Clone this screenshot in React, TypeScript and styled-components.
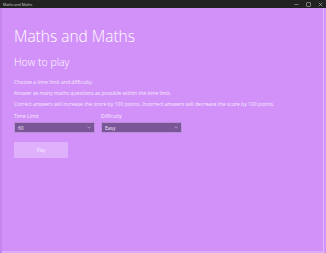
import React from "react";
import styled, { createGlobalStyle } from "styled-components";

const Global = createGlobalStyle`
  html, body { margin: 0; padding: 0; background: #d291f9; }
  body { font-family: "Open Sans", "Noto Sans", sans-serif; }
`;

const Window = styled.div`
  width: 326px;
  height: 253px;
  display: flex;
  flex-direction: column;
  background: #d291f9;
  overflow: hidden;
`;

const TitleBar = styled.div`
  height: 8px;
  background: #222222;
  display: flex;
  align-items: center;
  justify-content: space-between;
  padding-left: 3px;
  flex-shrink: 0;
`;

const TitleText = styled.span`
  color: #d8d8d8;
  font-size: 3.6px;
  font-family: "Open Sans", sans-serif;
`;

const Controls = styled.div`
  display: flex;
  height: 100%;
`;

const CtrlBtn = styled.div`
  width: 12px;
  height: 8px;
  display: flex;
  align-items: center;
  justify-content: center;
`;

const Body = styled.div`
  flex: 1;
  display: flex;
  min-height: 0;
`;

const LeftEdge = styled.div`
  width: 2px;
  background: #c585ee;
`;

const Main = styled.div`
  flex: 1;
  display: flex;
  flex-direction: column;
`;

const Content = styled.div`
  flex: 1;
  padding: 18px 0 0 12px;
  display: flex;
  flex-direction: column;
`;

const Heading = styled.h1`
  margin: 0;
  font-weight: 300;
  font-size: 15.5px;
  line-height: 21px;
  color: #ffffff;
`;

const SubHeading = styled.h2`
  margin: 8px 0 0 0;
  font-weight: 300;
  font-size: 10.5px;
  line-height: 14px;
  color: #ffffff;
`;

const Para = styled.p`
  margin: 0;
  font-size: 5.1px;
  line-height: 11px;
  color: #f6ecfd;
`;

const Paras = styled.div`
  margin-top: 8px;
  display: flex;
  flex-direction: column;
`;

const Fields = styled.div`
  margin-top: 3px;
  display: flex;
  gap: 6px;
`;

const Field = styled.div`
  display: flex;
  flex-direction: column;
  gap: 2px;
`;

const Label = styled.span`
  font-size: 5.1px;
  line-height: 7px;
  color: #f6ecfd;
`;

const Select = styled.div`
  width: 81px;
  height: 11px;
  box-sizing: border-box;
  border: 1px solid #b98fd6;
  background: #7a5597;
  display: flex;
  align-items: center;
  justify-content: space-between;
  padding: 0 3px 0 3px;
  color: #f4eaf9;
  font-size: 5px;
`;

const PlayButton = styled.div`
  margin-top: 9px;
  width: 54px;
  height: 16px;
  background: #dfb0fb;
  display: flex;
  align-items: center;
  justify-content: center;
  color: #f8eefe;
  font-size: 4.5px;
`;

const BottomLine = styled.div`
  height: 2px;
  background: #dbaafa;
`;

const RightEdge = styled.div`
  width: 3px;
  display: flex;
`;

const RightLine = styled.div`
  width: 1px;
  background: #e4bafc;
`;

const Chevron = () => (
  <svg width="4" height="3" viewBox="0 0 4 3">
    <path d="M0.5 0.8 L2 2.2 L3.5 0.8" stroke="#d9c6e6" strokeWidth="0.6" fill="none" />
  </svg>
);

export default function App() {
  return (
    <>
      <Global />
      <Window>
        <TitleBar>
          <TitleText>Maths and Maths</TitleText>
          <Controls>
            <CtrlBtn>
              <svg width="5" height="5" viewBox="0 0 5 5">
                <path d="M0.5 2.5 H4.5" stroke="#cfcfcf" strokeWidth="0.5" />
              </svg>
            </CtrlBtn>
            <CtrlBtn>
              <svg width="5" height="5" viewBox="0 0 5 5">
                <rect x="0.75" y="0.75" width="3.5" height="3.5" stroke="#cfcfcf" strokeWidth="0.5" fill="none" />
              </svg>
            </CtrlBtn>
            <CtrlBtn>
              <svg width="5" height="5" viewBox="0 0 5 5">
                <path d="M0.7 0.7 L4.3 4.3 M4.3 0.7 L0.7 4.3" stroke="#cfcfcf" strokeWidth="0.5" />
              </svg>
            </CtrlBtn>
          </Controls>
        </TitleBar>
        <Body>
          <LeftEdge />
          <Main>
            <Content>
              <Heading>Maths and Maths</Heading>
              <SubHeading>How to play</SubHeading>
              <Paras>
                <Para>Choose a time limit and difficulty.</Para>
                <Para>Answer as many maths questions as possible within the time limit.</Para>
                <Para>
                  Correct answers will increase the score by 100 points. Incorrect answers will decrease the score by 100 points.
                </Para>
              </Paras>
              <Fields>
                <Field>
                  <Label>Time Limit</Label>
                  <Select>
                    <span>60</span>
                    <Chevron />
                  </Select>
                </Field>
                <Field>
                  <Label>Difficulty</Label>
                  <Select>
                    <span>Easy</span>
                    <Chevron />
                  </Select>
                </Field>
              </Fields>
              <PlayButton>Play</PlayButton>
            </Content>
            <BottomLine />
          </Main>
          <RightEdge>
            <RightLine />
          </RightEdge>
        </Body>
      </Window>
    </>
  );
}
